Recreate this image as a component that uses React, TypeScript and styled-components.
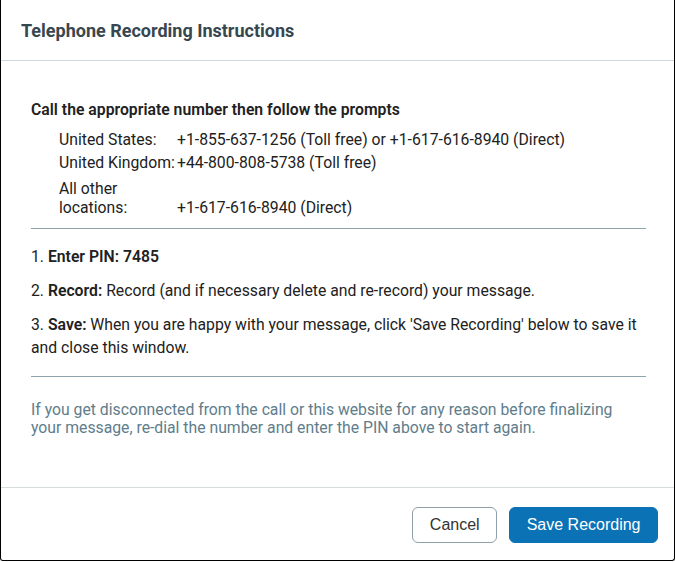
import React from "react"
import styled, { createGlobalStyle } from "styled-components"

const GlobalStyle = createGlobalStyle`
  html, body {
    margin: 0;
    padding: 0;
    background: #ffffff;
  }
  * {
    box-sizing: border-box;
  }
`

const Window = styled.div`
  width: 675px;
  height: 561px;
  display: flex;
  flex-direction: column;
  border: 1px solid #000;
  border-top: none;
  border-radius: 0 0 3px 3px;
  background: #fff;
  font-family: Roboto, "Liberation Sans", sans-serif;
  color: #212121;
`

const Header = styled.div`
  height: 61px;
  display: flex;
  align-items: center;
  padding: 0 20px;
  border-bottom: 1px solid #cfd8dc;
`

const Title = styled.h2`
  margin: 0;
  font-size: 18px;
  font-weight: 700;
  color: #37474f;
`

const Body = styled.div`
  flex: 1;
  padding: 37px 28px 0 30px;
  font-size: 15.75px;
`

const Lead = styled.p`
  margin: 0 0 7px;
  font-weight: 600;
  line-height: 23px;
  color: #212121;
`

const NumberTable = styled.table`
  border-collapse: collapse;
  margin-left: 28px;
  line-height: 19px;
`

const Label = styled.td<{ $tall?: boolean }>`
  width: 118px;
  padding: ${(p) => (p.$tall ? "5px 0 2px" : "2px 0")};
  vertical-align: bottom;
`

const Value = styled.td`
  padding: 2px 0;
  vertical-align: bottom;
`

const Divider = styled.hr<{ $above: number; $below: number }>`
  border: none;
  border-top: 1px solid #90a4ae;
  margin: ${(p) => p.$above}px 0 ${(p) => p.$below}px;
`

const Step = styled.p`
  margin: 0 0 11px;
  line-height: 23px;
  b {
    font-weight: 600;
  }
`

const Note = styled.p`
  margin: 0;
  line-height: 18px;
  color: #607d8b;
`

const Footer = styled.div`
  height: 73px;
  display: flex;
  justify-content: flex-end;
  align-items: center;
  gap: 12px;
  padding: 1px 16px 0;
  border-top: 1px solid #d6dbde;
`

const Button = styled.button`
  height: 36px;
  padding: 0 16.5px;
  border-radius: 6px;
  font-family: "Liberation Sans", Arial, sans-serif;
  font-size: 16px;
  cursor: pointer;
  border: 1px solid #8fa0aa;
  background: #fff;
  color: #333;
`

const PrimaryButton = styled(Button)`
  border-color: #0b72b6;
  background: #0b72b6;
  color: #fff;
`

const numbers = [
  { label: "United States:", value: "+1-855-637-1256 (Toll free) or +1-617-616-8940 (Direct)" },
  { label: "United Kingdom:", value: "+44-800-808-5738 (Toll free)" },
  { label: "All other locations:", value: "+1-617-616-8940 (Direct)", tall: true },
]

export default function App() {
  return (
    <>
      <GlobalStyle />
      <Window>
        <Header>
          <Title>Telephone Recording Instructions</Title>
        </Header>
        <Body>
          <Lead>Call the appropriate number then follow the prompts</Lead>
          <NumberTable>
            <tbody>
              {numbers.map((n) => (
                <tr key={n.label}>
                  <Label $tall={n.tall}>{n.label}</Label>
                  <Value>{n.value}</Value>
                </tr>
              ))}
            </tbody>
          </NumberTable>
          <Divider $above={9} $below={16} />
          <Step>
            1. <b>Enter PIN: 7485</b>
          </Step>
          <Step>
            2. <b>Record:</b> Record (and if necessary delete and re-record) your message.
          </Step>
          <Step>
            3. <b>Save:</b> When you are happy with your message, click 'Save Recording' below to save it and
            close this window.
          </Step>
          <Divider $above={17} $below={24} />
          <Note>
            If you get disconnected from the call or this website for any reason before finalizing your
            message, re-dial the number and enter the PIN above to start again.
          </Note>
        </Body>
        <Footer>
          <Button>Cancel</Button>
          <PrimaryButton>Save Recording</PrimaryButton>
        </Footer>
      </Window>
    </>
  )
}
